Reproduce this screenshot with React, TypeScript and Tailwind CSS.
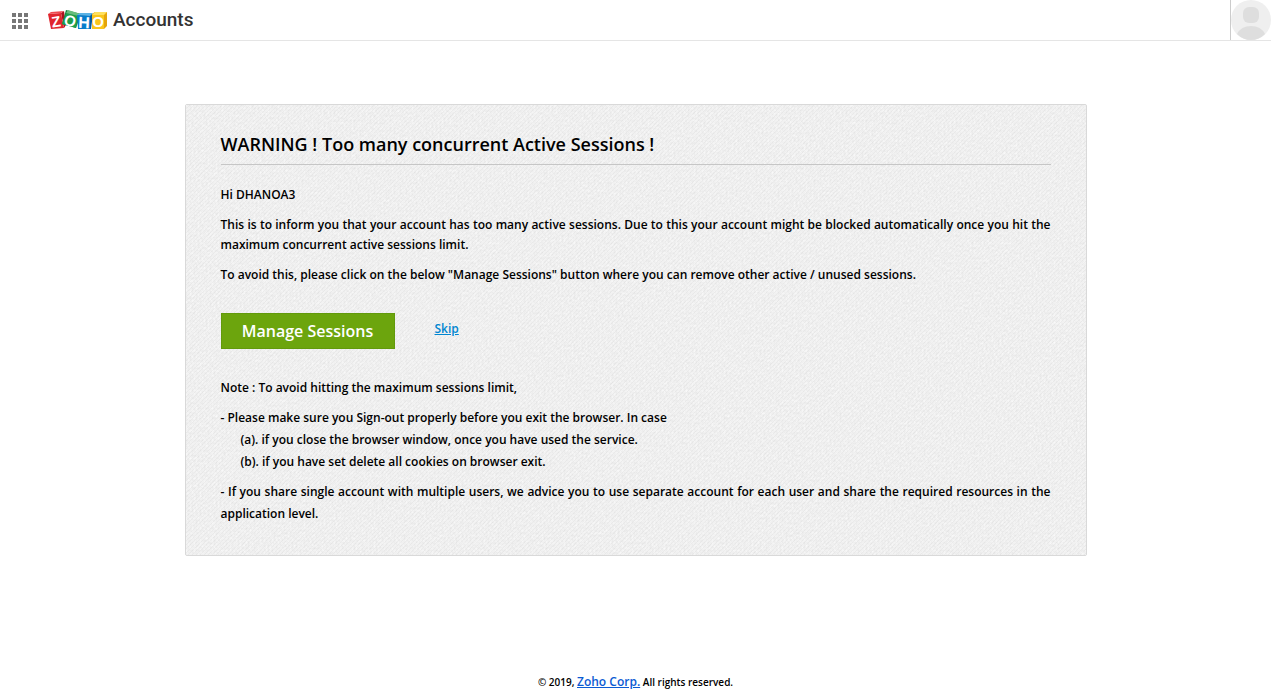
const tiles = [0, 6, 12];

function AppsIcon() {
  return (
    <svg width="16" height="16" viewBox="0 0 16 16" fill="#777" aria-hidden="true">
      {tiles.map((y) => tiles.map((x) => <rect key={`${x}-${y}`} x={x} y={y} width="4" height="4" />))}
    </svg>
  );
}

function ZohoLogo() {
  return (
    <svg width="60" height="20" viewBox="0 0 60 20" role="img" aria-label="Zoho" fontFamily="Liberation Sans, sans-serif" fontWeight="700" fill="#fff" textAnchor="middle">
      <path d="M13 3 16 1 18 15 16 18Z" fill="#a9121c" />
      <path d="M0 4 13 3 16 18 3 19Z" fill="#e0262e" />
      <path d="M0 4 3 2 16 1 13 3Z" fill="#ee4a50" />
      <path d="M18 0 33 4 28 18 14 14Z" fill="#12803c" />
      <path d="M18 3 30 6 28 18 14 14Z" fill="#1c9e4c" />
      <path d="M18 3 20 0 33 4 30 6Z" fill="#67bd7d" />
      <path d="M30 5 33 3 45 4 43 19H30Z" fill="#07599c" />
      <path d="M29 5 42 6 42 19 30 19Z" fill="#087dcb" />
      <path d="M29 5 32 3 45 3 42 6Z" fill="#5cb3e5" />
      <path d="M44 4 47 2 59 2 59 16 56 19 44 19Z" fill="#e5a50c" />
      <path d="M44 5H56V19H44Z" fill="#fbc51b" />
      <path d="M44 5 47 2H59L56 5Z" fill="#ffe05c" />
      <text x="8" y="17" fontSize="15" transform="rotate(-8 8 11)">Z</text>
      <text x="22" y="16" fontSize="15" transform="rotate(18 22 11)">O</text>
      <text x="36" y="18" fontSize="16" transform="rotate(3 36 12)">H</text>
      <text x="50" y="17" fontSize="15">O</text>
    </svg>
  );
}

function Avatar() {
  return (
    <svg width="40" height="40" viewBox="0 0 40 40" aria-hidden="true">
      <circle cx="20" cy="20" r="20" fill="#efefef" />
      <rect x="12" y="7" width="16" height="16" rx="6" fill="#dedede" />
      <path d="M6 34Q10 26 20 26T34 34Q28 40 20 40T6 34Z" fill="#dedede" />
    </svg>
  );
}

function PaperTexture() {
  return (
    <svg className="absolute inset-0 h-full w-full" aria-hidden="true">
      <filter id="paper" x="0" y="0" width="100%" height="100%" colorInterpolationFilters="sRGB">
        <feTurbulence type="fractalNoise" baseFrequency="0.5 0.4" numOctaves="2" seed="4" />
        <feColorMatrix values="0.09 0 0 0 0.899  0.09 0 0 0 0.899  0.09 0 0 0 0.899  0 0 0 0 1" />
      </filter>
      <pattern id="weave" width="4" height="4" patternUnits="userSpaceOnUse">
        <path d="M-1 5 5-1M-1 1 1-1M3 5 5 3" stroke="#000" strokeOpacity="0.03" />
      </pattern>
      <rect width="100%" height="100%" filter="url(#paper)" />
      <rect width="100%" height="100%" fill="url(#weave)" />
    </svg>
  );
}

export default function App() {
  return (
    <div className="flex min-h-screen flex-col bg-white font-['Open_Sans',sans-serif] text-xs font-semibold text-black">
      <header className="flex h-[41px] shrink-0 items-stretch border-b border-[#e5e5e5]">
        <button type="button" aria-label="Apps" className="flex items-center px-3 pt-px">
          <AppsIcon />
        </button>
        <div className="ml-2 flex items-center gap-[5px]">
          <ZohoLogo />
          <span className="font-[Roboto,sans-serif] text-[19px] font-medium text-[#333]">Accounts</span>
        </div>
        <button type="button" aria-label="Profile" className="ml-auto border-l border-[#ccc]">
          <Avatar />
        </button>
      </header>

      <main className="relative mx-auto mt-[63px] w-full max-w-[902px] rounded-xs border border-[#d9d9d9] bg-[#eee]">
        <PaperTexture />
        <div className="relative px-[35px] pt-6 pb-[30px]">
          <h1 className="border-b border-[#c6c6c6] pt-px pb-1.5 text-lg font-semibold">
            WARNING ! Too many concurrent Active Sessions !
          </h1>
          <div className="mt-5 space-y-2.5 text-justify leading-5">
            <p>Hi DHANOA3</p>
            <p>
              This is to inform you that your account has too many active sessions. Due to this your account might be
              blocked automatically once you hit the maximum concurrent active sessions limit.
            </p>
            <p>
              To avoid this, please click on the below "Manage Sessions" button where you can remove other active /
              unused sessions.
            </p>
          </div>
          <div className="mt-7 flex items-start gap-10">
            <button type="button" className="h-9 min-w-[174px] border border-[#629a0b] bg-[#6ca50d] px-5 text-base font-semibold text-white">
              Manage Sessions
            </button>
            <a href="#skip" className="pt-1.5 leading-5 text-[#0086d1] underline">
              Skip
            </a>
          </div>
          <div className="mt-7 space-y-2 text-justify leading-[22px]">
            <p>Note : To avoid hitting the maximum sessions limit,</p>
            <div>
              <p>- Please make sure you Sign-out properly before you exit the browser. In case</p>
              <p className="pl-5">(a). if you close the browser window, once you have used the service.</p>
              <p className="pl-5">(b). if you have set delete all cookies on browser exit.</p>
            </div>
            <p>
              - If you share single account with multiple users, we advice you to use separate account for each user and
              share the required resources in the application level.
            </p>
          </div>
        </div>
      </main>

      <footer className="mt-auto pb-0.5 text-center text-[10px] leading-5">
        © 2019,{' '}
        <a href="#zoho" className="text-xs text-[#0b5bd3] underline">
          Zoho Corp.
        </a>{' '}
        All rights reserved.
      </footer>
    </div>
  );
}
